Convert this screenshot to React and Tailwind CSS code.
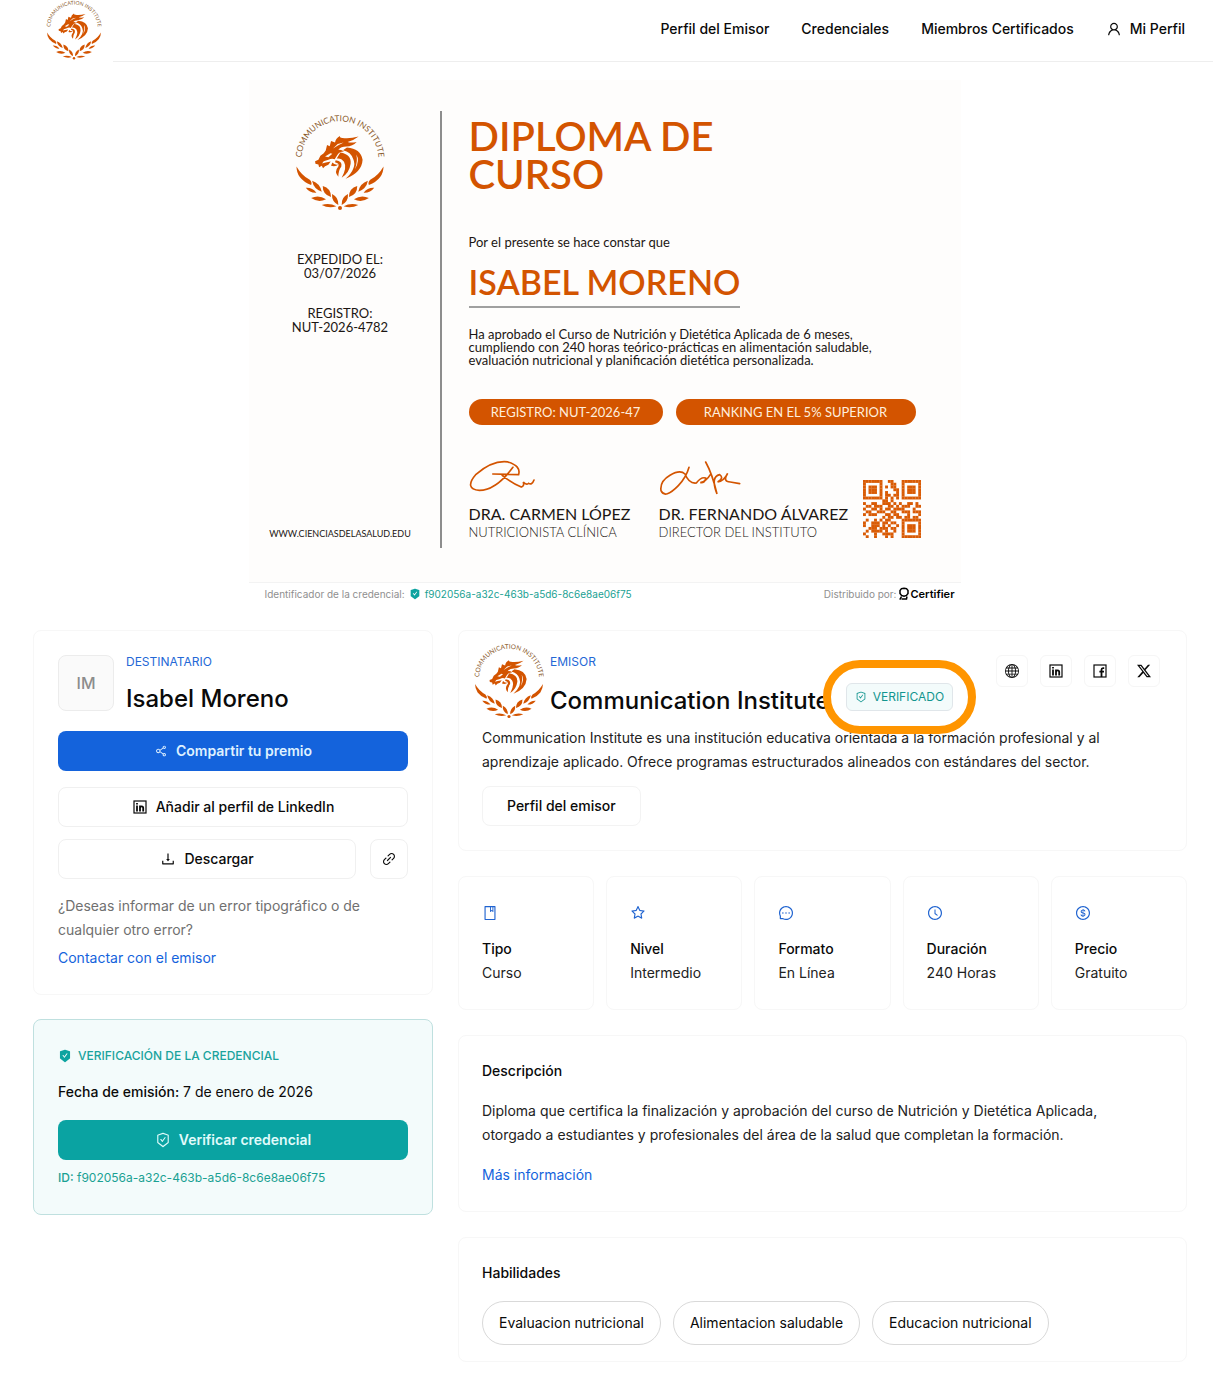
import React, { useId } from 'react';
import {
  AiFillSafetyCertificate,
  AiOutlineBook,
  AiOutlineClockCircle,
  AiOutlineDollar,
  AiOutlineDownload,
  AiOutlineLink,
  AiOutlineMessage,
  AiOutlineSafetyCertificate,
  AiOutlineShareAlt,
  AiOutlineStar,
  AiOutlineUser,
} from 'react-icons/ai';
import { BsGlobe, BsTwitterX } from 'react-icons/bs';

const CREDENTIAL_ID = 'f902056a-a32c-463b-a5d6-8c6e8ae06f75';

const navLinks = ['Perfil del Emisor', 'Credenciales', 'Miembros Certificados'];

const stats = [
  { icon: AiOutlineBook, label: 'Tipo', value: 'Curso' },
  { icon: AiOutlineStar, label: 'Nivel', value: 'Intermedio' },
  { icon: AiOutlineMessage, label: 'Formato', value: 'En Línea' },
  { icon: AiOutlineClockCircle, label: 'Duración', value: '240 Horas' },
  { icon: AiOutlineDollar, label: 'Precio', value: 'Gratuito' },
];

const skills = ['Evaluacion nutricional', 'Alimentacion saludable', 'Educacion nutricional'];

// Left half of the laurel: [x1, y1, x2, y2, thickness]
const leaves = [
  [32, 222, 64, 237, 6],
  [51, 201, 80, 234, 8],
  [48, 253, 93, 257, 8],
  [83, 217, 108, 250, 10],
  [80, 274, 124, 278, 6],
  [111, 241, 130, 274, 8],
];

const leafPath = ([x1, y1, x2, y2, t]) => {
  const len = Math.hypot(x2 - x1, y2 - y1);
  const nx = (-(y2 - y1) / len) * t * 1.6;
  const ny = ((x2 - x1) / len) * t * 1.6;
  const mx = (x1 + x2) / 2;
  const my = (y1 + y2) / 2;
  return `M${x1} ${y1}Q${mx + nx} ${my + ny} ${x2} ${y2}Q${mx - nx} ${my - ny} ${x1} ${y1}Z`;
};

function Branch() {
  return (
    <>
      <path d="M4 158Q20 186 44 198Q52 206 48 214Q26 206 14 190Q4 176 4 158Z" />
      {leaves.map((leaf) => (
        <path key={leaf.join()} d={leafPath(leaf)} />
      ))}
    </>
  );
}

function InstituteLogo({ className }) {
  const arcId = useId();
  return (
    <svg viewBox="0 0 270 292" className={className} role="img" aria-label="Communication Institute">
      <path id={arcId} d="M19 138A116 116 0 1 1 251 138" fill="none" />
      <text fill="#8a5a2c" fontFamily="Lato, sans-serif" fontSize="25" textAnchor="middle">
        <textPath href={`#${arcId}`} startOffset="50%">COMMUNICATION INSTITUTE</textPath>
      </text>
      <g fill="#d35400" transform="translate(46 46)">
        <path d="M46 64L50 47L58 51L62 35L74 40Q76 26 89 20Q88 26 96 26Q118 29 145 22Q130 34 112 38Q122 42 139 38Q127 51 108 52Q92 52 84 62Q93 60 101 67Q86 67 80 79L73 90Q64 86 54 92L40 96L35 103L46 100L61 97L54 107L44 111L38 117L34 110L26 114L24 106L15 104L14 96L24 92L30 80L40 72Z" />
        <path d="M110 55Q151 58 157 92Q155 130 106 149Q141 116 129 90Q122 68 98 63Z" />
        <path d="M90 70Q124 76 121 104Q117 132 94 146Q111 116 101 98Q93 86 79 88Z" />
        <path d="M76 93Q97 95 93 112Q84 124 84 143Q70 128 84 112Q88 102 74 99Z" />
        <path d="M66 100Q72 108 84 106Q76 114 62 110Z" />
        <path d="M44 82L60 72L66 74L54 84ZM68 58L82 44L100 40L84 48Z" fill="#fff6ee" />
        <path d="M138 76Q150 94 134 120Q143 96 138 76Z" fill="#fff6ee" />
      </g>
      <g fill="#d35400">
        <Branch />
        <g transform="translate(270 0) scale(-1 1)">
          <Branch />
        </g>
        <circle cx="135" cy="283" r="6" />
      </g>
    </svg>
  );
}

const qrRows = [
  '111111100110001111111',
  '100000100011001000001',
  '101110101011001011101',
  '101110100001101011101',
  '101110101000101011101',
  '100000101101101000001',
  '111111101010101111111',
  '000000011010000000000',
  '100110011101010011010',
  '011011100110101110011',
  '100110101101111000100',
  '011001110011001110111',
  '101110001101100010001',
  '000000010110110110110',
  '010010101100001111111',
  '100111011011001000001',
  '100111010100101011101',
  '001110111011001011101',
  '010111101001001011101',
  '100010011110001000001',
  '010010001010001111111',
];

function QrCode() {
  return (
    <svg viewBox="0 0 21 21" className="w-[58px] h-[58px]" fill="#d95b05" role="img" aria-label="Código QR">
      {qrRows.map((row, y) =>
        row.split('').map((cell, x) => cell === '1' && <rect key={`${x}-${y}`} x={x} y={y} width="1.05" height="1.05" />)
      )}
    </svg>
  );
}

function LinkedInIcon() {
  return (
    <svg viewBox="0 0 16 16" className="w-4 h-4" fill="none" stroke="currentColor" aria-hidden="true">
      <rect x="2" y="2" width="12" height="12" strokeWidth="1.2" />
      <path d="M5 6.5V12.500M8 6.5V12.500M8 9C8 6.8 11.2 6.8 11.2 9V12.500" strokeWidth="1.8" />
      <path d="M4.1 4.7H5.9" strokeWidth="1.6" />
    </svg>
  );
}

function FacebookIcon() {
  return (
    <svg viewBox="0 0 16 16" className="w-4 h-4" fill="none" stroke="currentColor" aria-hidden="true">
      <rect x="2" y="2" width="12" height="12" strokeWidth="1.2" />
      <path d="M12.2 5.2H11C9.7 5.2 9.5 5.8 9.5 6.8V14M7.4 8.7H12" strokeWidth="1.8" />
    </svg>
  );
}

function CertifierMark() {
  return (
    <svg viewBox="0 0 12 14" className="w-3 h-3.5" fill="none" stroke="#000" strokeWidth="1.5" aria-hidden="true">
      <path d="M6 1.2L8.5 1.6L10 3.6V6.4L8.5 8.4L6 9.2L3.5 8.4L2 6.4V3.6L3.5 1.6Z" />
      <path d="M3.5 9.5L1.8 12.6M3.5 12H8.5L9 9.5" />
    </svg>
  );
}

const socials = [
  { name: 'Sitio web', icon: <BsGlobe className="w-3.5 h-3.5" /> },
  { name: 'LinkedIn', icon: <LinkedInIcon /> },
  { name: 'Facebook', icon: <FacebookIcon /> },
  { name: 'X', icon: <BsTwitterX className="w-3.5 h-3.5" /> },
];

function Card({ className = '', children }) {
  return <section className={`rounded-lg border border-[#f7f7f7] ${className}`}>{children}</section>;
}

function Header() {
  return (
    <header className="flex h-[62px]">
      <a href="#" className="w-[113px] shrink-0 pl-[46px]">
        <InstituteLogo className="w-[56px] h-[60px]" />
      </a>
      <nav className="flex flex-1 items-center justify-end gap-8 border-b border-[#eeeeee] pr-7 pb-1 text-sm font-medium">
        {navLinks.map((link) => (
          <a key={link} href="#">{link}</a>
        ))}
        <a href="#" className="flex items-center gap-2">
          <AiOutlineUser className="w-4 h-4" />
          Mi Perfil
        </a>
      </nav>
    </header>
  );
}

function Diploma() {
  return (
    <section className="mx-auto mt-[18px] w-[712px] max-w-full">
      <div className="flex h-[502px] bg-[#fefdfc] pt-[31px] pb-[34px] font-['Lato',sans-serif] text-[#1c1613]">
        {/* Side column */}
        <div className="flex w-[193px] shrink-0 flex-col items-center border-r-2 border-[#8d8d8d] pr-2 text-center text-[13px] leading-[14px]">
          <InstituteLogo className="mt-[3px] w-[90px] h-[97px]" />
          <p className="mt-[41px]">EXPEDIDO EL:<br />03/07/2026</p>
          <p className="mt-[26px]">REGISTRO:<br />NUT-2026-4782</p>
          <p className="mt-auto pb-2 text-[9px] leading-3">WWW.CIENCIASDELASALUD.EDU</p>
        </div>

        {/* Body */}
        <div className="flex-1 pl-[27px]">
          <h1 className="mt-1.5 text-[40px] leading-[38px] font-semibold text-[#d35400]">DIPLOMA DE<br />CURSO</h1>
          <p className="mt-[41px] text-[13px] leading-4">Por el presente se hace constar que</p>
          <p className="mt-3 inline-block border-b-2 border-[#a0a0a0] pb-1 text-[34px] leading-10 font-semibold text-[#d35400]">
            ISABEL MORENO
          </p>
          <p className="mt-5 text-[13px] leading-[13px]">
            Ha aprobado el Curso de Nutrición y Dietética Aplicada de 6 meses,<br />
            cumpliendo con 240 horas teórico-prácticas en alimentación saludable,<br />
            evaluación nutricional y planificación dietética personalizada.
          </p>
          <div className="mt-8 flex gap-[13px] text-[13px] leading-[26px] text-[#ffeedd]">
            <span className="w-[194px] rounded-full bg-[#d35400] text-center">REGISTRO: NUT-2026-47</span>
            <span className="w-[240px] rounded-full bg-[#d35400] text-center">RANKING EN EL 5% SUPERIOR</span>
          </div>
          <div className="mt-[34px] flex">
            <div className="w-[190px]">
              <svg viewBox="84 60 200 100" className="h-[34px] w-[67px]" fill="none" stroke="#d35400" strokeWidth="5" strokeLinecap="round">
                <path d="M155 104L232 106Q240 80 200 68Q155 62 105 105Q68 148 115 153Q165 152 215 84M183 108Q210 130 240 143Q250 140 246 128Q254 138 262 132Q272 138 278 122" />
              </svg>
              <p className="mt-3 text-base leading-[18px]">DRA. CARMEN LÓPEZ</p>
              <p className="text-[13px] leading-[18px] font-light">NUTRICIONISTA CLÍNICA</p>
            </div>
            <div className="w-[204px]">
              <svg viewBox="632 66 246 112" className="h-[38px] w-[82px]" fill="none" stroke="#d35400" strokeWidth="5" strokeLinecap="round">
                <path d="M722 90Q714 120 690 145Q650 186 638 160Q634 132 665 114Q695 96 710 110Q722 140 744 137Q758 118 772 122Q770 138 756 136Q774 132 786 112M772 74Q792 110 806 170Q786 118 814 112Q828 122 808 134Q826 132 838 108Q822 134 846 134L874 139" />
              </svg>
              <p className="mt-2 text-base leading-[18px]">DR. FERNANDO ÁLVAREZ</p>
              <p className="text-[13px] leading-[18px] font-light">DIRECTOR DEL INSTITUTO</p>
            </div>
            <div className="pt-[21px]">
              <QrCode />
            </div>
          </div>
        </div>
      </div>

      <div className="flex items-center justify-between border-t border-[#f3f3f3] pt-[3px] pr-1.5 pl-4 text-[10px] leading-4 text-[#8f8f8f]">
        <p className="flex items-center gap-1">
          Identificador de la credencial:
          <AiFillSafetyCertificate className="w-3 h-3 text-[#0ca3a0]" />
          <a href="#" className="text-[#1aa193]">{CREDENTIAL_ID}</a>
        </p>
        <p className="flex items-center">
          Distribuido por:
          <span className="ml-0.5 flex items-center text-[11px] font-semibold text-black">
            <CertifierMark />
            Certifier
          </span>
        </p>
      </div>
    </section>
  );
}

function RecipientCard() {
  return (
    <Card className="p-6">
      <div className="flex gap-3">
        <div className="flex h-14 w-14 items-center justify-center rounded-lg border border-[#ececec] bg-[#fafafa] font-medium text-[#8c8c8c]">
          IM
        </div>
        <div>
          <p className="text-xs leading-[14px] text-[#2468d6]">DESTINATARIO</p>
          <h2 className="mt-3 text-2xl leading-9 font-medium">Isabel Moreno</h2>
        </div>
      </div>

      <div className="mt-3.5 flex flex-col gap-3 text-sm font-medium">
        <button className="mb-1 flex h-10 items-center justify-center gap-2 rounded-lg bg-[#1463dc] font-semibold text-[#dff1ff]">
          <AiOutlineShareAlt className="w-3.5 h-3.5" />
          Compartir tu premio
        </button>
        <button className="flex h-10 items-center justify-center gap-2 rounded-lg border border-[#f0f0f0]">
          <LinkedInIcon />
          Añadir al perfil de LinkedIn
        </button>
        <div className="flex gap-3.5">
          <button className="flex h-10 flex-1 items-center justify-center gap-2 rounded-lg border border-[#f0f0f0]">
            <AiOutlineDownload className="w-4 h-4" />
            Descargar
          </button>
          <button aria-label="Copiar enlace" className="flex h-10 w-[38px] items-center justify-center rounded-lg border border-[#f0f0f0]">
            <AiOutlineLink className="w-4 h-4" />
          </button>
        </div>
      </div>

      <p className="mt-[15px] text-sm leading-6 text-[#707070]">
        ¿Deseas informar de un error tipográfico o de cualquier otro error?
      </p>
      <a href="#" className="mt-1 block text-sm leading-6 text-[#1463dc]">Contactar con el emisor</a>
    </Card>
  );
}

function VerificationCard() {
  return (
    <section className="rounded-lg border border-[#bfe0df] bg-[#f3fbfb] px-6 pt-6 pb-[26px]">
      <h2 className="flex items-center gap-1.5 text-xs leading-6 font-medium text-[#1aa39d]">
        <AiFillSafetyCertificate className="w-3.5 h-3.5 text-[#0ca3a0]" />
        VERIFICACIÓN DE LA CREDENCIAL
      </h2>
      <p className="mt-3 text-sm leading-6">
        <span className="font-medium">Fecha de emisión:</span> 7 de enero de 2026
      </p>
      <button className="mt-4 flex h-10 w-full items-center justify-center gap-2 rounded-lg bg-[#0aa3a2] text-sm font-semibold text-[#e0fbfb]">
        <AiOutlineSafetyCertificate className="w-4 h-4" />
        Verificar credencial
      </button>
      <p className="mt-2 text-xs leading-5 text-[#1aa193]">
        <span className="font-medium">ID:</span> {CREDENTIAL_ID}
      </p>
    </section>
  );
}

function IssuerCard() {
  return (
    <Card className="px-[23px] pt-3 pb-6">
      <div className="flex justify-between">
        <div className="flex gap-1.5">
          <InstituteLogo className="-ml-2 w-[70px] h-[76px]" />
          <div className="pt-3">
            <p className="text-xs leading-[14px] text-[#2468d6]">EMISOR</p>
            <div className="mt-3.5 flex items-center gap-4">
              <h2 className="text-2xl leading-9 font-medium">Communication Institute</h2>
              <span className="relative -mt-2 flex h-7 items-center gap-1.5 rounded-md border border-[#e0e6ea] bg-[#f3fbfb] px-2 text-xs text-[#12958f]">
                <AiOutlineSafetyCertificate className="w-3 h-3" />
                VERIFICADO
                {/* Highlight ring */}
                <span className="absolute -inset-x-6 -inset-y-6 rounded-full border-8 border-[#ff9500]" />
              </span>
            </div>
          </div>
        </div>
        <div className="mr-[3px] flex gap-3 pt-3">
          {socials.map((social) => (
            <a
              key={social.name}
              href="#"
              aria-label={social.name}
              className="flex h-8 w-8 items-center justify-center rounded-md border border-[#f6f6f6]"
            >
              {social.icon}
            </a>
          ))}
        </div>
      </div>
      <p className="mt-[7px] max-w-[660px] text-sm leading-6 text-[#222]">
        Communication Institute es una institución educativa orientada a la formación profesional y al
        aprendizaje aplicado. Ofrece programas estructurados alineados con estándares del sector.
      </p>
      <button className="mt-3 h-10 rounded-lg border border-[#f3f3f3] px-6 text-sm font-medium">Perfil del emisor</button>
    </Card>
  );
}

export default function App() {
  return (
    <div className="min-h-screen bg-white pb-6 font-['Inter',sans-serif] text-[#0a0a0a]">
      <Header />
      <main>
        <div className="pr-1">
          <Diploma />
        </div>

        <div className="mt-7 grid grid-cols-[400px_minmax(0,1fr)] items-start gap-[25px] pr-[26px] pl-[33px]">
          <div className="flex flex-col gap-6">
            <RecipientCard />
            <VerificationCard />
          </div>

          <div className="flex flex-col gap-[25px]">
            <IssuerCard />

            <div className="grid grid-cols-5 gap-3">
              {stats.map(({ icon: Icon, label, value }) => (
                <Card key={label} className="px-[23px] py-6 text-sm leading-6">
                  <Icon className="mt-1 mb-4 w-4 h-4 text-[#1f63d0]" />
                  <p className="font-medium">{label}</p>
                  <p className="text-[#222]">{value}</p>
                </Card>
              ))}
            </div>

            <Card className="px-[23px] pt-[23px] pb-6 text-sm leading-6">
              <h3 className="font-medium">Descripción</h3>
              <p className="mt-4 max-w-[650px] text-[#222]">
                Diploma que certifica la finalización y aprobación del curso de Nutrición y Dietética Aplicada,
                otorgado a estudiantes y profesionales del área de la salud que completan la formación.
              </p>
              <a href="#" className="mt-4 inline-block text-[#1463dc]">Más información</a>
            </Card>

            <Card className="px-[23px] pt-[23px] pb-4 text-sm leading-6">
              <h3 className="font-medium">Habilidades</h3>
              <ul className="mt-4 flex flex-wrap gap-3">
                {skills.map((skill) => (
                  <li key={skill} className="rounded-full border border-[#d9d9d9] px-4 py-[9px]">{skill}</li>
                ))}
              </ul>
            </Card>
          </div>
        </div>
      </main>
    </div>
  );
}
